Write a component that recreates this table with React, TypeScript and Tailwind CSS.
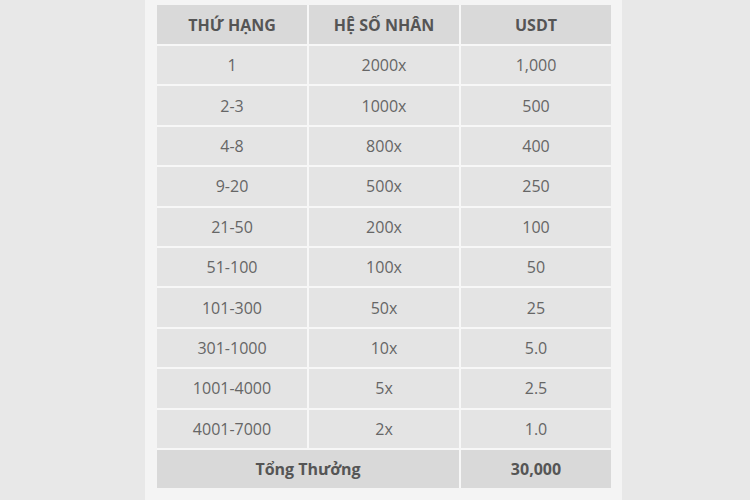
const rows = [
  ["1", "2000x", "1,000"],
  ["2-3", "1000x", "500"],
  ["4-8", "800x", "400"],
  ["9-20", "500x", "250"],
  ["21-50", "200x", "100"],
  ["51-100", "100x", "50"],
  ["101-300", "50x", "25"],
  ["301-1000", "10x", "5.0"],
  ["1001-4000", "5x", "2.5"],
  ["4001-7000", "2x", "1.0"],
];

export default function App() {
  return (
    <div className="w-[750px] h-[500px] bg-[#e8e8e8] flex overflow-hidden font-['Open_Sans',sans-serif]">
      <div className="ml-[145px] w-[477px] h-full bg-[#f4f4f4] px-[12px] pt-[5px]">
        <div className="grid grid-cols-[150px_150px_150px] gap-[2px] bg-[#f7f7f7] text-[16px]">
          {["THỨ HẠNG", "HỆ SỐ NHÂN", "USDT"].map((h) => (
            <div
              key={h}
              className="h-[39px] bg-[#d9d9d9] flex items-center justify-center font-bold text-[#555]"
            >
              {h}
            </div>
          ))}
          {rows.map((r) =>
            r.map((c, i) => (
              <div
                key={r[0] + i}
                className="h-[38.4px] bg-[#e4e4e4] flex items-center justify-center text-[#666]"
              >
                {c}
              </div>
            ))
          )}
          <div className="col-span-2 h-[38.4px] bg-[#d9d9d9] flex items-center justify-center font-bold text-[#555]">
            Tổng Thưởng
          </div>
          <div className="h-[38.4px] bg-[#d9d9d9] flex items-center justify-center font-bold text-[#555]">
            30,000
          </div>
        </div>
      </div>
    </div>
  );
}
